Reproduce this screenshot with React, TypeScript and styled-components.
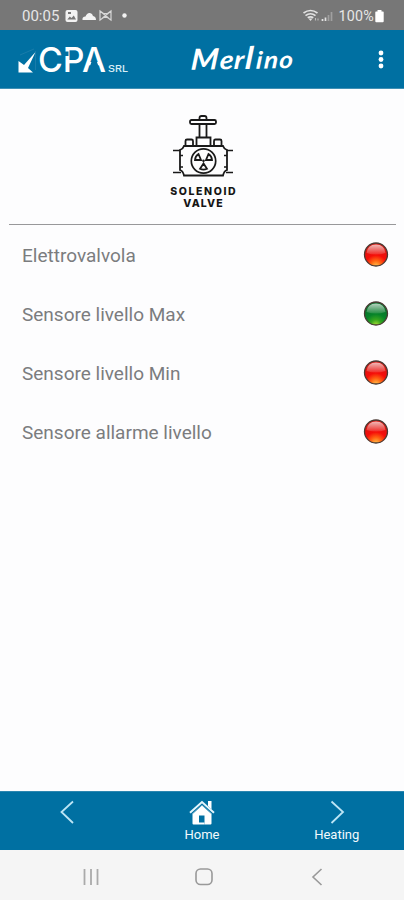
import React from "react";
import styled, { createGlobalStyle } from "styled-components";

const Global = createGlobalStyle`
  * { box-sizing: border-box; }
  body { margin: 0; background: #fdfdfe; font-family: Roboto, "Liberation Sans", sans-serif; }
  svg { display: block; flex: none; }
`;

const Screen = styled.div`
  width: 404px;
  height: 900px;
  display: flex;
  flex-direction: column;
  overflow: hidden;
  background: #fdfdfe;
`;

const StatusBar = styled.header`
  height: 30px;
  flex: none;
  display: flex;
  align-items: center;
  padding: 1px 20px 0 22px;
  background: #777777;
  color: #e6e6e6;
`;

const Clock = styled.span`
  width: 43px;
  font-size: 15px;
  line-height: 18px;
`;

const StatusIcons = styled.div`
  flex: 1;
`;

const Charge = styled.span`
  margin: 0 1px 0 3px;
  font-size: 14.3px;
  line-height: 18px;
  letter-spacing: 0.2px;
`;

const AppBar = styled.div`
  height: 59px;
  flex: none;
  display: grid;
  grid-template-columns: 172px 108px 1fr;
  align-items: center;
  padding: 0 19px 0 17px;
  background: #0070a2;
  border-bottom: 1px solid #3f90b5;
`;

const MenuButton = styled.button`
  justify-self: end;
  padding: 0;
  border: 0;
  background: none;
`;

const Hero = styled.section`
  height: 136px;
  flex: none;
  margin: 0 8px 0 9px;
  display: flex;
  flex-direction: column;
  align-items: center;
  padding: 25px 0 0 1px;
  border-bottom: 1.5px solid #98989a;
`;

const HeroTitle = styled.h1`
  margin: 7px 0 0;
  font: 800 10.5px/12px Inter, sans-serif;
  color: #151515;
  display: flex;
  flex-direction: column;
  align-items: center;
`;

const TitleLine = styled.span<{ $tracking: number }>`
  height: 12px;
  letter-spacing: ${({ $tracking }) => $tracking}px;
  margin-right: -${({ $tracking }) => $tracking}px;
`;

const SensorList = styled.ul`
  flex: 1;
  margin: 0;
  padding: 0;
  list-style: none;
`;

const SensorRow = styled.li`
  height: 59px;
  display: flex;
  align-items: center;
  justify-content: space-between;
  padding: 0 15px 0 22px;
`;

const SensorLabel = styled.span`
  padding-top: 2px;
  font-size: 19px;
  line-height: 24px;
  color: #7b7c7e;
`;

const NavBar = styled.nav`
  height: 59px;
  flex: none;
  display: grid;
  grid-template-columns: repeat(3, 134.7px);
  background: #0070a2;
  border-top: 1px solid #2b86b0;
  color: #f3fafd;
`;

const NavItem = styled.button`
  display: flex;
  flex-direction: column;
  align-items: center;
  gap: 1px;
  padding: 6px 0 0;
  border: 0;
  background: none;
  color: inherit;
  font: 400 13px/15px Roboto, sans-serif;
`;

const SystemBar = styled.footer`
  height: 50px;
  flex: none;
  display: grid;
  grid-template-columns: 113px 113px 113px;
  justify-content: center;
  align-items: center;
  justify-items: center;
  padding: 3px 0 0 3px;
  background: #f5f5f5;
`;

const NotificationIcons = () => (
  <svg width="66" height="16" viewBox="0 0 66 16" fill="#f2f2f2">
    <rect x="0.5" y="2" width="12" height="12" rx="2" />
    <path d="M2.300 11.500l2.500-3 1.700 1.500L8.800 7.500l2.200 4zM3 4h3v2H3z" fill="#777" />
    <path d="M17.500 12q-.5-3.300 3-3.500 1.500-4 4.500-3.500 2.500.3 3 3 3 .5 3 4z" />
    <path d="M35 3v9l3.500-2.500h4L46 12V3l-3.500 2.500h-4zM35 3l8.500 7M46 3l-8.500 7" fill="none" stroke="#d8d8d8" strokeWidth="1.200" />
    <circle cx="59.500" cy="7.500" r="2.200" />
  </svg>
);

const SignalIcons = () => (
  <svg width="33" height="16" viewBox="0 0 33 16" fill="none" stroke="#e2e2e2" strokeWidth="1.700">
    <path d="M.5 5q7-5 14 0M2.500 7.600q5-3.700 10 0M4.700 9.800q2.800-2 5.600 0" />
    <path d="M5.500 10.500h4L7.500 13z" fill="#e2e2e2" stroke="none" />
    <path d="M12.500 12.500v-2.500M15 12.500v-2" strokeWidth="1.100" stroke="#bbb" />
    <path d="M19.500 13v-2M22.500 13V9.500" />
    <path d="M25.500 13V7M28.500 13V4" stroke="#a0a0a0" />
  </svg>
);

const BatteryIcon = () => (
  <svg width="9" height="14" viewBox="0 0 9 14" fill="#fff">
    <path d="M2.500 1h4v1.500H8q.7 0 .7.800v9q0 .9-.9.900H1.200q-.9 0-.9-.9v-9q0-.8.700-.8h1.500z" />
  </svg>
);

const CompanyLogo = () => (
  <svg width="120" height="56" viewBox="0 0 120 56">
    <path d="M1.500 30v11.500h14.500l-5-4.500L18.500 21 7 34z" fill="#fff" />
    <path d="M3 24l14-6M18.500 20v19" fill="none" stroke="#2481ad" strokeWidth=".7" />
    <text x="21" y="41" textLength="68" lengthAdjust="spacingAndGlyphs" fontFamily="Inter, sans-serif" fontWeight="500" fontSize="34.500" fill="#fff">CPA</text>
    <path d="M46 20.500h5.500v4.500H46zM74.600 30.500h5.200l2.200 6.200h-9.600z" fill="#0070a2" />
    <text x="91" y="41" textLength="20" lengthAdjust="spacingAndGlyphs" fontFamily="Inter, sans-serif" fontSize="9.500" fontWeight="500" fill="#d9eef6">SRL</text>
  </svg>
);

const ProductLogo = () => (
  <svg width="108" height="56" viewBox="0 0 108 56">
    <text x="0" y="38" fontFamily="Lato, sans-serif" fontStyle="italic" fontWeight="700" fill="#fff" transform="rotate(-1 50 38) scale(1.090 1) skewX(-5) translate(4.500 0)">
      <tspan fontSize="29">M</tspan>
      <tspan fontSize="26" dx="1">e</tspan>
      <tspan fontSize="26" dx=".500">r</tspan>
      <tspan fontSize="31" dx="1">l</tspan>
      <tspan fontSize="24" dx="2.500">i</tspan>
      <tspan fontSize="24" dx="1.500">n</tspan>
      <tspan fontSize="24" dx="1">o</tspan>
    </text>
  </svg>
);

const MenuIcon = () => (
  <svg width="8" height="20" viewBox="0 0 8 20" fill="#fff">
    <circle cx="4" cy="4" r="2.400" /><circle cx="4" cy="10.500" r="2.400" /><circle cx="4" cy="17" r="2.400" />
  </svg>
);

const ValveIcon = () => (
  <svg width="62" height="65" viewBox="0 0 62 65" fill="none" stroke="#191919" strokeWidth="1.800">
    <rect x="18" y="6" width="26" height="4" rx="1.500" />
    <path d="M27.500 6V4q0-2 2-2h3q2 0 2 2v2M27.500 10V24M34.500 10V24" />
    <path d="M24.500 32v-8.500h14V32M13.500 31v-4q0-1.500 1.500-1.500h4.500q1.500 0 1.500 1.500V31M42 31v-4q0-1.500 1.500-1.500H48q1.500 0 1.500 1.500V31" />
    <path d="M12 32h39q1 3 4 4v20q-3 1-4 5.500H12q-1-4.500-4-5.500V36q3-1 4-4z" />
    <path d="M1 36.500h7M55 36.500h6M1 58.500h8M54 58.500h7M8 41.500h3M8 53h3M52 41.500h3M52 53h3" strokeWidth="1.600" />
    <circle cx="31.500" cy="47" r="12.200" strokeWidth="1.700" />
    <path d="M29 46h-6q.3-4 3.500-6zM34 46h6q-.3-4-3.500-6zM31.500 49.500l-3.500 5.300q3.500 1.700 7 0z" strokeWidth="1.800" />
    <circle cx="31.500" cy="46.800" r="1.300" fill="#191919" stroke="none" />
  </svg>
);

type LampColor = "red" | "green";

const lampStops: Record<LampColor, string[]> = {
  red: ["#d9150f", "#f50d09", "#ff6412", "#ffc04b"],
  green: ["#08702a", "#068329", "#35a51e", "#a9df35"],
};

const Lamp = ({ color, id }: { color: LampColor; id: string }) => {
  const stops = lampStops[color];
  return (
    <svg width="26" height="26" viewBox="0 0 26 26">
      <defs>
        <radialGradient id={`${id}-body`} cx=".5" cy="1" r=".85">
          <stop offset="0" stopColor={stops[3]} />
          <stop offset=".28" stopColor={stops[2]} />
          <stop offset=".56" stopColor={stops[1]} />
          <stop offset="1" stopColor={stops[0]} />
        </radialGradient>
        <linearGradient id={`${id}-shine`} x2="0" y2="1">
          <stop stopColor="#fff" stopOpacity=".7" />
          <stop offset="1" stopColor="#fff" stopOpacity=".12" />
        </linearGradient>
      </defs>
      <circle cx="13" cy="12.500" r="11.500" fill={`url(#${id}-body)`} stroke="#4a3a34" strokeWidth="1.300" />
      <path d="M3.500 11Q4.500 2.500 13 2.500t9.500 8.500q-9.500 3-19 0z" fill={`url(#${id}-shine)`} />
    </svg>
  );
};

const Chevron = ({ right }: { right?: boolean }) => (
  <svg width="28" height="28" viewBox="0 0 28 28" fill="none" stroke="#bce5f5" strokeWidth="1.800">
    <path d={right ? "M8.500 3.500L20 14 8.500 25" : "M20 3.500L8.500 14 20 25"} />
  </svg>
);

const HomeIcon = () => (
  <svg width="28" height="28" viewBox="0 0 28 28">
    <path d="M4.500 16L14 7.500l9.500 8.500v9.500q0 1-1 1h-6V17.500h-5.500v9H5.500q-1 0-1-1zM20 3h3.500v8.500L20 8z" fill="#fff" />
    <path d="M2 14.800L14 4l12 10.800" fill="none" stroke="#e4f5fc" strokeWidth="2" />
    <path d="M4 16L14 7l10 9" fill="none" stroke="#6faecb" strokeWidth=".8" />
    <path d="M11 24.500h5.500v2H11z" fill="#fff" />
  </svg>
);

const RecentsIcon = () => (
  <svg width="20" height="20" viewBox="0 0 20 20" stroke="#aaa" strokeWidth="1.800">
    <path d="M3.500 2v16M10 2v16M16.500 2v16" />
  </svg>
);

const SystemHomeIcon = () => (
  <svg width="20" height="20" viewBox="0 0 20 20" fill="none" stroke="#999" strokeWidth="1.600">
    <rect x="2" y="2" width="16" height="15.500" rx="4.500" />
  </svg>
);

const SystemBackIcon = () => (
  <svg width="20" height="20" viewBox="0 0 20 20" fill="none" stroke="#999" strokeWidth="1.600">
    <path d="M14.500 2L6 10l8.500 8" />
  </svg>
);

const sensors: { label: string; color: LampColor }[] = [
  { label: "Elettrovalvola", color: "red" },
  { label: "Sensore livello Max", color: "green" },
  { label: "Sensore livello Min", color: "red" },
  { label: "Sensore allarme livello", color: "red" },
];

export default function App() {
  return (
    <Screen>
      <Global />
      <StatusBar>
        <Clock>00:05</Clock>
        <StatusIcons><NotificationIcons /></StatusIcons>
        <SignalIcons />
        <Charge>100%</Charge>
        <BatteryIcon />
      </StatusBar>
      <AppBar>
        <CompanyLogo />
        <ProductLogo />
        <MenuButton aria-label="Menu"><MenuIcon /></MenuButton>
      </AppBar>
      <Hero>
        <ValveIcon />
        <HeroTitle>
          <TitleLine $tracking={1.6}>SOLENOID</TitleLine>
          <TitleLine $tracking={1.1}>VALVE</TitleLine>
        </HeroTitle>
      </Hero>
      <SensorList>
        {sensors.map((sensor, index) => (
          <SensorRow key={sensor.label}>
            <SensorLabel>{sensor.label}</SensorLabel>
            <Lamp color={sensor.color} id={`lamp-${index}`} />
          </SensorRow>
        ))}
      </SensorList>
      <NavBar>
        <NavItem aria-label="Back"><Chevron /></NavItem>
        <NavItem><HomeIcon />Home</NavItem>
        <NavItem><Chevron right />Heating</NavItem>
      </NavBar>
      <SystemBar><RecentsIcon /><SystemHomeIcon /><SystemBackIcon /></SystemBar>
    </Screen>
  );
}
